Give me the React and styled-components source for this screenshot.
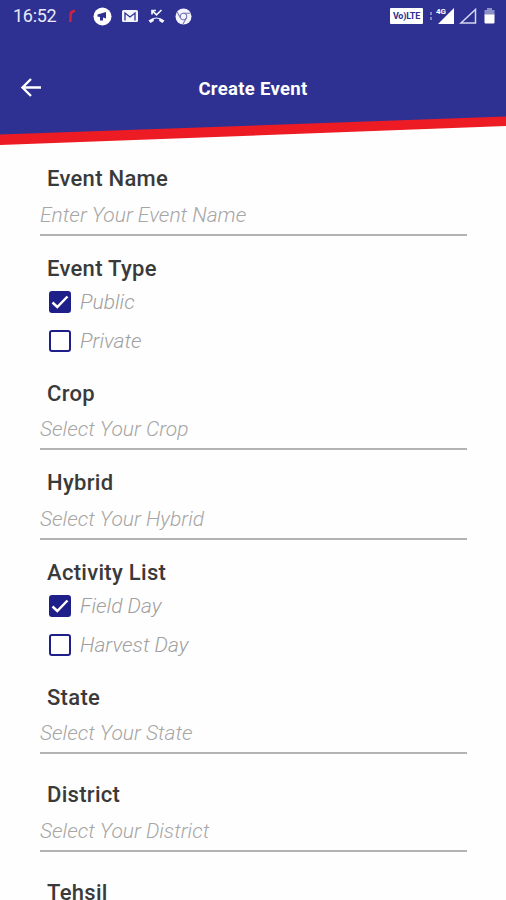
import React, { useState } from "react";
import styled, { createGlobalStyle } from "styled-components";

const GlobalStyle = createGlobalStyle`
  * {
    box-sizing: border-box;
  }
  body {
    margin: 0;
    background: #fff;
    font-family: Roboto, "Liberation Sans", sans-serif;
  }
`;

const Screen = styled.div`
  width: 506px;
  height: 900px;
  overflow: hidden;
  background: #fefefe;
`;

const Header = styled.header`
  height: 146px;
  background: #ed1c24;
  clip-path: polygon(0 0, 100% 0, 100% 126px, 0 145px);
`;

const HeaderInner = styled.div`
  height: 146px;
  background: #2e3192;
  clip-path: polygon(0 0, 100% 0, 100% 116.5px, 0 134.5px);
`;

const StatusBar = styled.div`
  display: flex;
  align-items: center;
  justify-content: space-between;
  height: 32px;
  padding: 0 11px 0 13px;
`;

const StatusGroup = styled.div`
  display: flex;
  align-items: center;
`;

const Clock = styled.span`
  width: 54px;
  color: #e9eaf8;
  font-size: 18px;
  letter-spacing: -0.3px;
  line-height: 32px;
`;

const StatusIcon = styled.svg`
  display: block;
  margin-left: ${props => props.$gap || 0}px;
`;

const VolteBadge = styled.span`
  width: 33px;
  height: 16px;
  border-radius: 1px;
  background: #fff;
  color: #2e3192;
  font-size: 9px;
  font-weight: 700;
  line-height: 16px;
  letter-spacing: -0.2px;
  text-align: center;
`;

const Toolbar = styled.div`
  display: grid;
  grid-template-columns: 44px 1fr 44px;
  align-items: center;
  height: 48px;
  margin-top: 32px;
`;

const BackButton = styled.button`
  display: flex;
  padding: 0 0 0 19px;
  border: 0;
  background: none;
  cursor: pointer;
`;

const Title = styled.h1`
  margin: 0;
  padding-top: 2px;
  color: #fff;
  font-size: 18.5px;
  font-weight: 700;
  letter-spacing: 0.3px;
  line-height: 24px;
  text-align: center;
`;

const Form = styled.form`
  padding: 18px 39px 0 40px;
`;

const Section = styled.section`
  margin-bottom: ${props => props.$gap || 18}px;
`;

const Label = styled.label`
  display: block;
  height: 28px;
  padding-left: 7px;
  color: #3a3a3a;
  font-size: 22px;
  font-weight: 500;
  letter-spacing: 0.3px;
  line-height: 29px;
`;

const Input = styled.input`
  display: block;
  width: 100%;
  height: 43.5px;
  padding: 4px 0 0;
  border: 0;
  border-bottom: 2px solid #b3b3b3;
  border-radius: 0;
  background: none;
  color: #3a3a3a;
  font: italic 300 21px Roboto, "Liberation Sans", sans-serif;
  &:focus {
    outline: 0;
  }
  &::placeholder {
    color: #a6a6a6;
    opacity: 1;
  }
`;

const Option = styled.div`
  display: flex;
  align-items: center;
  height: 39.5px;
  padding: 1px 0 0 9px;
  color: #a0a0a0;
  font-size: 21px;
  font-style: italic;
  font-weight: 300;
  cursor: pointer;
`;

const Box = styled.span`
  display: flex;
  width: 22px;
  height: 22px;
  margin-right: 9px;
  border: 2px solid #1f1f8a;
  border-radius: 3px;
  background: ${props => (props.$checked ? "#1f1f8a" : "#fff")};
`;

const TextField = ({ label, placeholder, gap }) => (
  <Section $gap={gap}>
    <Label>{label}</Label>
    <Input placeholder={placeholder} />
  </Section>
);

const CheckField = ({ label, options }) => {
  const [selected, setSelected] = useState(options[0]);
  return (
    <Section>
      <Label>{label}</Label>
      {options.map(option => (
        <Option key={option} onClick={() => setSelected(option)}>
          <Box $checked={option === selected}>
            {option === selected && (
              <svg width="18" height="18" viewBox="0 0 18 18">
                <path
                  d="M1.5 9.5 6.3 14 16.5 3.5"
                  fill="none"
                  stroke="#fff"
                  strokeWidth="2.5"
                />
              </svg>
            )}
          </Box>
          {option}
        </Option>
      ))}
    </Section>
  );
};

const Notifications = () => (
  <StatusGroup>
    <Clock>16:52</Clock>
    <StatusIcon width="8" height="14" viewBox="0 0 8 14" $gap={1}>
      <path
        d="M2.3 13 2.7 5Q3 2 7 2"
        fill="none"
        stroke="#c9243f"
        strokeWidth="2.6"
      />
    </StatusIcon>
    <StatusIcon width="19" height="19" viewBox="0 0 19 19" $gap={17}>
      <circle cx="9.5" cy="9.5" r="9" fill="#fff" />
      <path d="M4.5 7.5 13 5V11.5L10 10.5V13.5H7V10L4.5 9.5Z" fill="#2e3192" />
    </StatusIcon>
    <StatusIcon width="16" height="12" viewBox="0 0 16 12" $gap={10}>
      <rect width="16" height="12" rx="1.5" fill="#f4f4fc" />
      <path
        d="M3 10.5V3L8 7 13 3V10.5"
        fill="none"
        stroke="#2e3192"
        strokeWidth="1.3"
      />
    </StatusIcon>
    <StatusIcon width="17" height="15" viewBox="0 0 17 15" $gap={10}>
      <path
        d="M4 5.5V1.5H8M4 1.5 8.5 5.8 13.5 1"
        fill="none"
        stroke="#f4f4fc"
        strokeWidth="1.7"
      />
      <path
        d="M.5 11.5Q8.5 5.5 16.5 11.5L14.5 14 11.2 12V10Q8.5 9.2 5.8 10V12L2.5 14Z"
        fill="#f4f4fc"
      />
    </StatusIcon>
    <StatusIcon width="17" height="17" viewBox="0 0 17 17" $gap={10}>
      <circle cx="8.5" cy="8.5" r="8" fill="#f4f4fc" />
      <g fill="none" stroke="#7477b4" strokeWidth="1.1">
        <circle cx="8.5" cy="8.5" r="3.2" />
        <path d="M8.5 5.3H15.5M5.7 10.1 2.2 4.2M11.3 10.1 8 16" />
      </g>
    </StatusIcon>
  </StatusGroup>
);

const Indicators = () => (
  <StatusGroup>
    <VolteBadge>Vo)LTE</VolteBadge>
    <StatusIcon width="26" height="18" viewBox="0 0 26 18" $gap={6}>
      <path d="M2 5V8M2 10V13" stroke="#8589c5" strokeWidth="2" />
      <path d="M25 1V17H9Z" fill="#fff" />
      <text
        x="7"
        y="7"
        fill="#fff"
        stroke="#2e3192"
        strokeWidth="1"
        paintOrder="stroke"
        fontSize="8"
        fontWeight="700"
      >
        4G
      </text>
    </StatusIcon>
    <StatusIcon width="18" height="18" viewBox="0 0 18 18" $gap={4}>
      <path
        d="M16.5 2.5V16H2Z"
        fill="none"
        stroke="#d5d6ef"
        strokeWidth="1.5"
      />
    </StatusIcon>
    <StatusIcon width="11" height="16" viewBox="0 0 11 16" $gap={7}>
      <path d="M3 0H8V2H10.5V7H.5V2H3Z" fill="#8d90c6" />
      <path d="M.5 6.5H10.5V14.5Q10.5 15.5 9.5 15.5H1.5Q.5 15.5 .5 14.5Z" fill="#fff" />
    </StatusIcon>
  </StatusGroup>
);

export default function App() {
  return (
    <Screen>
      <GlobalStyle />
      <Header>
        <HeaderInner>
          <StatusBar>
            <Notifications />
            <Indicators />
          </StatusBar>
          <Toolbar>
            <BackButton aria-label="Back">
              <svg width="24" height="20" viewBox="0 0 24 20">
                <path
                  d="M22 9.5H4M12 1 3.5 9.5 12 18"
                  fill="none"
                  stroke="#fff"
                  strokeWidth="2.4"
                />
              </svg>
            </BackButton>
            <Title>Create Event</Title>
          </Toolbar>
        </HeaderInner>
      </Header>
      <Form>
        <TextField label="Event Name" placeholder="Enter Your Event Name" />
        <CheckField label="Event Type" options={["Public", "Private"]} />
        <TextField label="Crop" placeholder="Select Your Crop" />
        <TextField label="Hybrid" placeholder="Select Your Hybrid" />
        <CheckField
          label="Activity List"
          options={["Field Day", "Harvest Day"]}
        />
        <TextField label="State" placeholder="Select Your State" gap={26} />
        <TextField
          label="District"
          placeholder="Select Your District"
          gap={26}
        />
        <Label>Tehsil</Label>
      </Form>
    </Screen>
  );
}
